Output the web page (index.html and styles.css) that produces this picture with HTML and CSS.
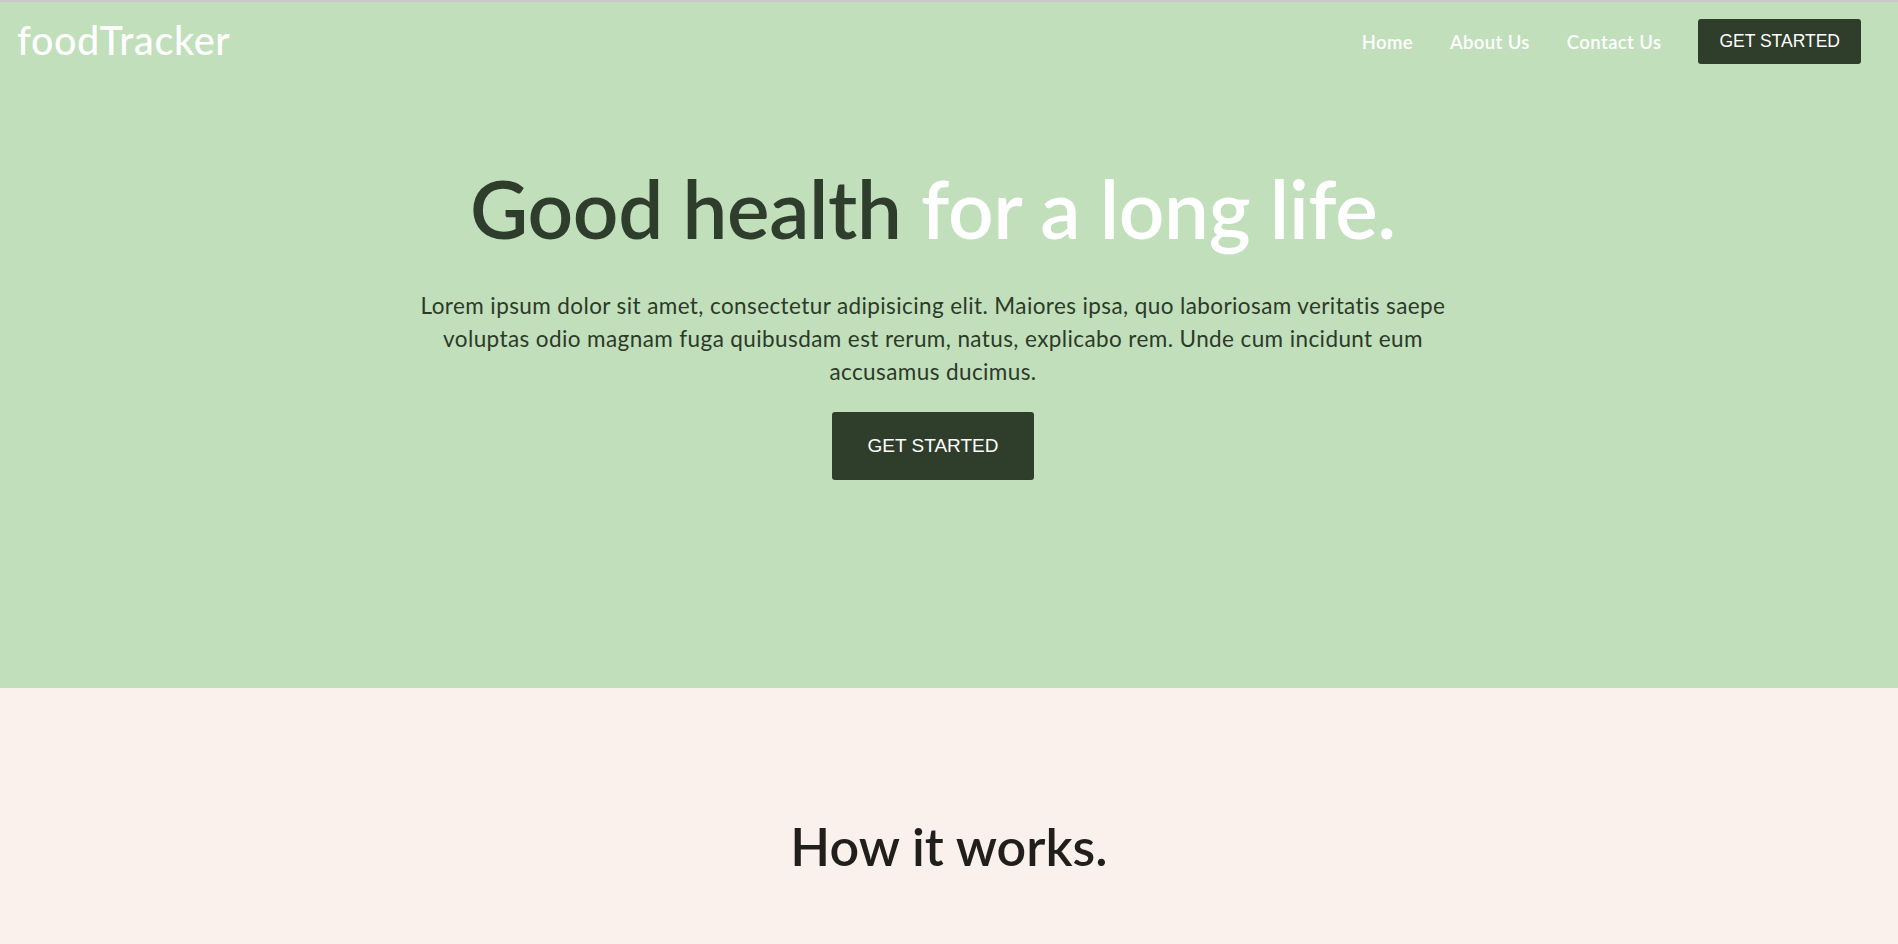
FILE: index.html
```html
<!DOCTYPE html>
<html lang="en">
<head>
<meta charset="utf-8">
<title>foodTracker</title>
<link rel="stylesheet" href="styles.css">
</head>
<body>
<header class="hero">
  <nav class="nav">
    <a class="logo" href="#">foodTracker</a>
    <div class="nav-links">
      <a class="nav-link" href="#">Home</a>
      <a class="nav-link" href="#">About Us</a>
      <a class="nav-link" href="#">Contact Us</a>
      <a class="btn btn-nav" href="#">GET STARTED</a>
    </div>
  </nav>
  <div class="hero-content">
    <h1 class="hero-title"><span class="dark">Good health</span> <span class="light">for a long life.</span></h1>
    <p class="hero-text">Lorem ipsum dolor sit amet, consectetur adipisicing elit. Maiores ipsa, quo laboriosam veritatis saepe voluptas odio magnam fuga quibusdam est rerum, natus, explicabo rem. Unde cum incidunt eum accusamus ducimus.</p>
    <a class="btn btn-hero" href="#">GET STARTED</a>
  </div>
</header>
<section class="how">
  <h2 class="how-title">How it works.</h2>
</section>
</body>
</html>
```
FILE: styles.css
```css
* { box-sizing: border-box; }
html, body { margin: 0; padding: 0; }
body {
  font-family: Lato, "Noto Sans", sans-serif;
  background: #fbf1ec;
  border-top: 2px solid #c9c9c9;
}
a { text-decoration: none; }

.hero {
  background: #c1dfbb;
  height: 686px;
  display: flex;
  flex-direction: column;
}

.nav {
  display: flex;
  justify-content: space-between;
  align-items: center;
  padding: 17px 37px 0 17px;
}
.logo {
  color: #ffffff;
  font-size: 39.5px;
  font-weight: 500;
  letter-spacing: 0.6px;
  line-height: 1;
  margin-top: -4px;
}
.nav-links {
  display: flex;
  align-items: center;
  gap: 37px;
}
.nav-link {
  color: #ffffff;
  font-size: 18.5px;
  font-weight: 600;
  letter-spacing: 0.4px;
}
.btn {
  display: inline-block;
  background: #2f3d2b;
  color: #ffffff;
  font-family: "Liberation Sans", Arial, sans-serif;
  border-radius: 3px;
  line-height: 1.15;
}
.btn-nav {
  font-size: 17.5px;
  padding: 12px 21px;
  height: 45px;
}
.hero-content {
  display: flex;
  flex-direction: column;
  align-items: center;
  text-align: center;
  padding-right: 32px;
  margin-top: 96px;
}
.hero-title {
  margin: 0;
  font-size: 80px;
  font-weight: 600;
  letter-spacing: -0.35px;
  line-height: 96px;
}
.hero-title .dark { color: #2f3d2c; }
.hero-title .light { color: #ffffff; }
.hero-text {
  margin: 33px 0 0;
  max-width: 1045px;
  font-size: 22.5px;
  letter-spacing: 0.4px;
  line-height: 33px;
  color: #2c3a29;
}
.btn-hero {
  margin-top: 24px;
  font-size: 19px;
  width: 202px;
  height: 68px;
  line-height: 68px;
  text-align: center;
}

.how {
  padding-top: 127px;
  text-align: center;
}
.how-title {
  margin: 0;
  font-size: 52px;
  font-weight: 600;
  line-height: 1.2;
  color: #201f1c;
}
```
